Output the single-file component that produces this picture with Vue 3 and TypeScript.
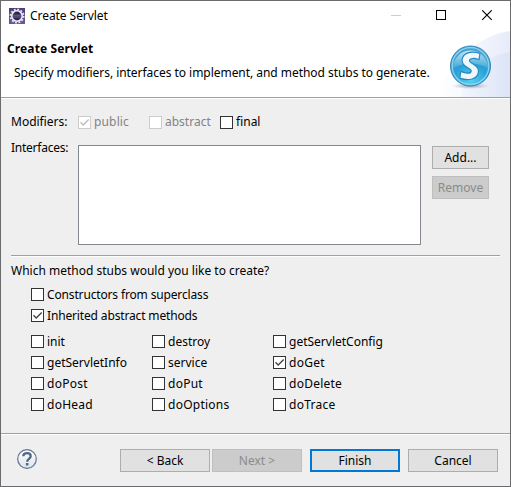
<script setup lang="ts">
import { reactive, ref } from 'vue'

interface Option {
  label: string
  checked: boolean
  disabled?: boolean
}

const modifiers = reactive<Option[]>([
  { label: 'public', checked: true, disabled: true },
  { label: 'abstract', checked: false, disabled: true },
  { label: 'final', checked: false },
])

const general = reactive<Option[]>([
  { label: 'Constructors from superclass', checked: false },
  { label: 'Inherited abstract methods', checked: true },
])

const stubs = reactive<Option[]>(
  [
    'init', 'destroy', 'getServletConfig',
    'getServletInfo', 'service', 'doGet',
    'doPost', 'doPut', 'doDelete',
    'doHead', 'doOptions', 'doTrace',
  ].map((label) => ({ label, checked: label === 'doGet' })),
)

const interfaces = ref<string[]>([])

function toggle(option: Option) {
  if (!option.disabled) option.checked = !option.checked
}
</script>

<template>
  <div class="window">
    <div class="titlebar">
      <svg class="app-icon" viewBox="0 0 16 16">
        <defs>
          <linearGradient id="tile" x1="0" y1="0" x2="0" y2="1">
            <stop offset="0" stop-color="#4b3d78" />
            <stop offset="1" stop-color="#6957a0" />
          </linearGradient>
        </defs>
        <rect width="16" height="16" fill="url(#tile)" />
        <circle cx="8" cy="8" r="6.6" fill="none" stroke="#e8e5ee" stroke-width="1.8" stroke-dasharray="1.9 1.56" />
        <circle cx="8" cy="8" r="5.2" fill="#30254f" stroke="#f0eef5" stroke-width="1.6" />
        <path d="M4 7.2h8M4 9h8" stroke="#7d73a0" stroke-width=".9" />
      </svg>
      <span class="title">Create Servlet</span>
      <svg class="controls" viewBox="0 0 110 12">
        <path d="M0 5.500h10" stroke="#ccc" fill="none" />
        <rect x="45.500" y=".5" width="9" height="9" stroke="#000" fill="none" />
        <path d="M91.200 .3l9.500 9.500M100.700 .3L91.200 9.800" stroke="#000" stroke-width="1.100" fill="none" />
      </svg>
    </div>

    <header class="banner">
      <div class="banner-text">
        <h1>Create Servlet</h1>
        <p>Specify modifiers, interfaces to implement, and method stubs to generate.</p>
      </div>
      <svg class="banner-art" viewBox="0 0 75 67">
        <defs>
          <linearGradient id="swoosh" x1="0" y1="0" x2="1" y2="0">
            <stop offset="0" stop-color="#fff" />
            <stop offset=".5" stop-color="#f4f7fd" />
            <stop offset="1" stop-color="#e6ecf9" />
          </linearGradient>
          <linearGradient id="swoosh2" x1="0" y1="0" x2="1" y2="0">
            <stop offset="0" stop-color="#f3f6fd" />
            <stop offset="1" stop-color="#dce4f6" />
          </linearGradient>
          <radialGradient id="ball" cx=".5" cy=".85" r=".85">
            <stop offset="0" stop-color="#57d1f4" />
            <stop offset=".5" stop-color="#299fd6" />
            <stop offset="1" stop-color="#4aa5d3" />
          </radialGradient>
          <linearGradient id="gloss" x1="0" y1="0" x2="0" y2="1">
            <stop offset="0" stop-color="#d6f0fb" stop-opacity=".85" />
            <stop offset="1" stop-color="#b6e3f5" stop-opacity=".15" />
          </linearGradient>
          <radialGradient id="shade">
            <stop offset="0" stop-color="#9da3ad" />
            <stop offset="1" stop-color="#aeb4bd" stop-opacity="0" />
          </radialGradient>
        </defs>
        <path d="M0 67C18 28 45 5 75 1v66z" fill="url(#swoosh)" />
        <path d="M25 67C34 40 50 26 75 22v45z" fill="url(#swoosh2)" />
        <ellipse cx="35.500" cy="56" rx="19" ry="3" fill="url(#shade)" />
        <circle cx="35.500" cy="36" r="20" fill="url(#ball)" stroke="#3388b7" />
        <circle cx="35.500" cy="36" r="18.300" fill="none" stroke="#8fd2ee" stroke-width="1.300" />
        <path d="M18 38a17.500 17.500 0 0 1 35 0q-17-9-35 0z" fill="url(#gloss)" />
        <path d="M45 23.500l-1 6.200c-4.500-1.800-9.300-1.700-9.500.9-.2 3.200 9.500 3.700 9 10.800-.6 8.200-10.200 9.800-18.700 6.700l1-6.700c5.300 2.500 10.200 2.300 10.400-.3.200-3.500-9.600-3.800-9.200-10.900.5-7.600 9.400-9.800 18-6.700z" fill="#eef7fc" stroke="#2689bf" stroke-width="1.200" stroke-linejoin="round" />
      </svg>
    </header>

    <main class="content">
      <div class="modifiers">
        <span class="field-label">Modifiers:</span>
        <div
          v-for="m in modifiers"
          :key="m.label"
          class="check"
          :class="[m.label, { disabled: m.disabled }]"
          @click="toggle(m)"
        >
          <span class="box"><svg v-if="m.checked" viewBox="0 0 11 11"><path d="M1.500 5.300L4.200 8 9.700 2.500" /></svg></span>
          <span>{{ m.label }}</span>
        </div>
      </div>

      <div class="interfaces">
        <span class="field-label">Interfaces:</span>
        <div class="list"><div v-for="i in interfaces" :key="i">{{ i }}</div></div>
        <div class="side">
          <button>Add...</button>
          <button disabled>Remove</button>
        </div>
      </div>

      <div class="rule"></div>
      <p class="question">Which method stubs would you like to create?</p>

      <div class="general">
        <div v-for="g in general" :key="g.label" class="check" @click="toggle(g)">
          <span class="box"><svg v-if="g.checked" viewBox="0 0 11 11"><path d="M1.500 5.300L4.200 8 9.700 2.500" /></svg></span>
          <span>{{ g.label }}</span>
        </div>
      </div>

      <div class="stubs">
        <div
          v-for="s in stubs"
          :key="s.label"
          class="check"
          :class="{ handler: s.label.startsWith('do') }"
          @click="toggle(s)"
        >
          <span class="box"><svg v-if="s.checked" viewBox="0 0 11 11"><path d="M1.500 5.300L4.200 8 9.700 2.500" /></svg></span>
          <span>{{ s.label }}</span>
        </div>
      </div>
    </main>

    <footer class="footer">
      <svg class="help" viewBox="0 0 20 20">
        <defs>
          <linearGradient id="help-fill" x1="0" y1="0" x2="0" y2="1">
            <stop offset="0" stop-color="#fff" />
            <stop offset="1" stop-color="#dce4ed" />
          </linearGradient>
        </defs>
        <circle cx="10" cy="10" r="9.300" fill="url(#help-fill)" stroke="#60738e" stroke-width="1.200" />
        <path d="M6.300 7.200C6.500 3.200 13.700 3.200 13.700 7.200c0 2.700-3.500 2.700-3.500 5.500" fill="none" stroke="#526883" stroke-width="2.300" />
        <rect x="8.900" y="14" width="2.500" height="2.500" fill="#526883" />
      </svg>
      <button>&lt; Back</button>
      <button disabled>Next &gt;</button>
      <button class="primary">Finish</button>
      <button>Cancel</button>
    </footer>
  </div>
</template>

<style>
body {
  background: #efefef;
}
</style>

<style scoped>
.window {
  box-sizing: border-box;
  width: 511px;
  height: 487px;
  border: 1px solid #6b6a6d;
  background: #efefef;
  color: #000;
  font: 12px/16px "Noto Sans", "Open Sans", sans-serif;
  display: flex;
  flex-direction: column;
  overflow: hidden;
  white-space: nowrap;
  cursor: default;
}
.titlebar {
  height: 29px;
  flex: none;
  background: #fff;
  display: flex;
  align-items: center;
  padding-left: 8px;
}
.app-icon {
  width: 16px;
  height: 16px;
}
.title {
  margin-left: 5px;
  letter-spacing: -0.06px;
}
.controls {
  width: 110px;
  height: 12px;
  margin: 1px 9px 0 auto;
}
.banner {
  height: 67px;
  flex: none;
  background: #fff;
  border-bottom: 1px solid #a0a0a0;
  box-shadow: 0 1px #fff;
  display: flex;
  justify-content: space-between;
}
.banner-text {
  padding: 11px 0 0 6px;
}
h1 {
  margin: 0;
  font-size: 12px;
  line-height: 16px;
  font-weight: 700;
  letter-spacing: 0.12px;
}
p {
  margin: 0;
}
.banner-text p {
  margin: 8px 0 0 7px;
  letter-spacing: -0.042px;
}
.banner-art {
  width: 75px;
  height: 67px;
  flex: none;
}
.content {
  height: 335px;
  flex: none;
  padding: 0 10px;
  box-sizing: border-box;
}
.modifiers {
  display: flex;
  padding-top: 16px;
  height: 16px;
}
.field-label {
  width: 67px;
  flex: none;
}
.check {
  display: flex;
  align-items: center;
  gap: 3px;
  height: 16px;
}
.check.public,
.check.abstract {
  width: 71px;
}
.check.public {
  letter-spacing: 0.15px;
}
.check.disabled {
  color: #838383;
}
.box {
  box-sizing: border-box;
  width: 13px;
  height: 13px;
  flex: none;
  border: 1px solid #333;
  background: #fff;
  margin-top: 1px;
}
.box svg {
  display: block;
  width: 11px;
  height: 11px;
}
.box path {
  fill: none;
  stroke: #404040;
  stroke-width: 1.3;
}
.disabled .box {
  border-color: #ccc;
}
.disabled .box path {
  stroke: #bbb;
}
.interfaces {
  display: flex;
  align-items: flex-start;
  margin-top: 15px;
}
.interfaces .field-label {
  margin-top: -5px;
  letter-spacing: -0.25px;
}
.list {
  box-sizing: border-box;
  width: 343px;
  height: 100px;
  border: 1px solid #828790;
  background: #fff;
}
.side {
  display: flex;
  flex-direction: column;
  gap: 7px;
  margin: 1px 0 0 11px;
}
button {
  box-sizing: border-box;
  width: 90px;
  height: 23px;
  flex: none;
  margin: 0;
  padding: 1px 0 0;
  border: 1px solid #adadad;
  border-radius: 0;
  background: #e1e1e1;
  color: #000;
  font: inherit;
}
button:disabled {
  background: #ccc;
  border-color: #bfbfbf;
  color: #8b8b8b;
}
.side button {
  width: 57px;
}
.rule {
  height: 1px;
  margin-top: 10px;
  background: #a0a0a0;
  box-shadow: 0 1px #fff;
}
.question {
  margin-top: 7px;
}
.general,
.stubs {
  display: grid;
  padding-left: 20px;
}
.general {
  gap: 5px;
  padding-top: 7px;
  letter-spacing: -0.15px;
}
.stubs {
  grid-template-columns: repeat(3, 121px);
  gap: 5px 0;
  padding-top: 10px;
}
.general .check span + span,
.stubs .check span + span {
  padding-top: 2px;
}
.handler {
  letter-spacing: 0.25px;
}
.footer {
  flex: 1;
  border-top: 1px solid #a0a0a0;
  box-shadow: inset 0 1px #fff;
  display: flex;
  align-items: flex-start;
  padding: 15px 12px 0 16px;
}
.help {
  width: 20px;
  height: 20px;
  margin-right: 83px;
}
.footer button + button {
  margin-left: 2px;
}
.footer button + .primary,
.footer .primary + button {
  margin-left: 8px;
}
.primary {
  border: 2px solid #0078d7;
}
</style>
